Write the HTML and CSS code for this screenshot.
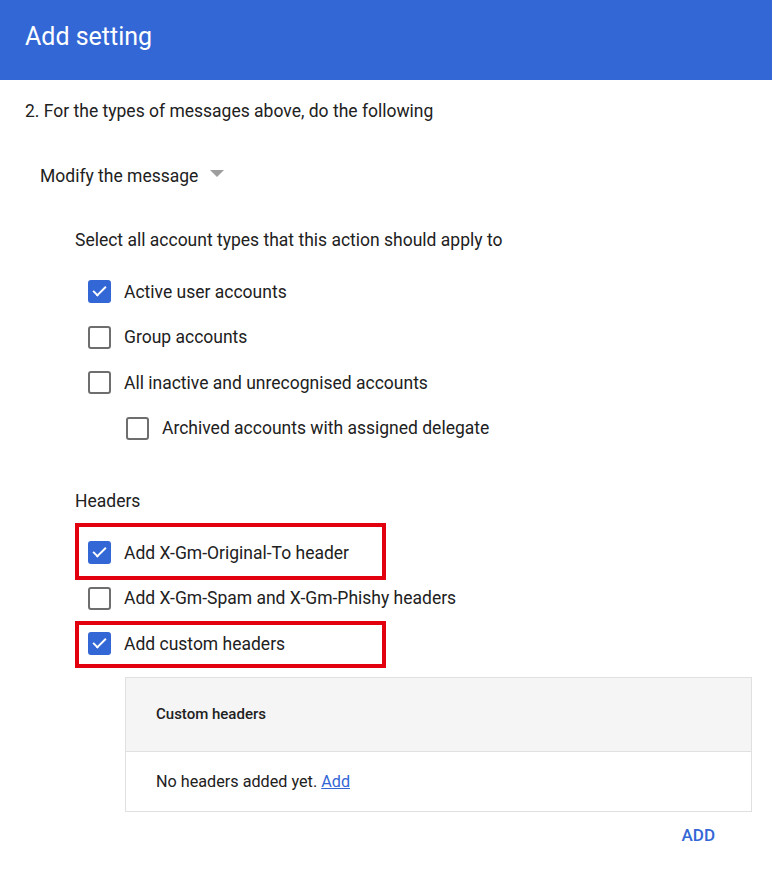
FILE: index.html
```html
<!DOCTYPE html>
<html>
<head>
    <title>Add setting</title>
    <link rel="stylesheet" href="styles.css">
</head>
<body>
    <div class="topbar">
        <h1>Add setting</h1>
    </div>

    <div class="content">
        <p class="step">2. For the types of messages above, do the following</p>

        <div class="dropdown">
            <span>Modify the message</span>
            <span class="caret"></span>
        </div>

        <div class="section">
            <p class="label">Select all account types that this action should apply to</p>

            <div class="options">
                <div class="option"><span class="box checked"></span>Active user accounts</div>
                <div class="option"><span class="box"></span>Group accounts</div>
                <div class="option"><span class="box"></span>All inactive and unrecognised accounts</div>
                <div class="option sub"><span class="box"></span>Archived accounts with assigned delegate</div>
            </div>

            <p class="label headers-label">Headers</p>

            <div class="options">
                <div class="option marked first"><span class="box checked"></span>Add X-Gm-Original-To header</div>
                <div class="option"><span class="box"></span>Add X-Gm-Spam and X-Gm-Phishy headers</div>
                <div class="option marked last"><span class="box checked"></span>Add custom headers</div>
            </div>

            <div class="table">
                <div class="table-head">Custom headers</div>
                <div class="table-body">No headers added yet. <a href="#">Add</a></div>
            </div>

            <div class="actions">
                <button>ADD</button>
            </div>
        </div>
    </div>
</body>
</html>
```

FILE: styles.css
```css
body {
    margin: 0;
    font-family: Roboto, 'Noto Sans', sans-serif;
    color: #212121;
    background: #fff;
}

.topbar {
    background: #3367d6;
    height: 80px;
    display: flex;
    align-items: center;
    padding: 0 25px;
}

.topbar h1 {
    margin: 0;
    color: #fff;
    font-size: 25px;
    font-weight: 400;
    position: relative;
    top: -4px;
}

.content {
    padding: 0 0 0 25px;
}

.step {
    margin: 0;
    padding-top: 20px;
    font-size: 17.5px;
    line-height: 22px;
}

.dropdown {
    display: flex;
    align-items: center;
    margin: 43px 0 0 15px;
    font-size: 17.5px;
    line-height: 22px;
}

.caret {
    width: 0;
    height: 0;
    border-left: 7px solid transparent;
    border-right: 7px solid transparent;
    border-top: 7px solid #9e9e9e;
    margin-left: 12px;
    position: relative;
    top: -3px;
}

.section {
    padding-left: 50px;
}

.label {
    margin: 42px 0 0;
    font-size: 17.5px;
    line-height: 22px;
}

.headers-label {
    margin-top: 39px;
}

.options {
    margin-top: 18px;
    display: flex;
    flex-direction: column;
}

.option {
    display: flex;
    align-items: center;
    height: 45.5px;
    padding-left: 13px;
    font-size: 17.5px;
    white-space: nowrap;
    position: relative;
}

.option.sub {
    padding-left: 51px;
}

/* red annotation frames */
.option.marked::before {
    content: '';
    position: absolute;
    left: 0;
    width: 303px;
    border: 4px solid #e2000f;
    pointer-events: none;
}

.option.first::before {
    top: -7px;
    bottom: -4px;
}

.option.last::before {
    top: 0;
    bottom: -1px;
}

.box {
    width: 19px;
    height: 19px;
    border: 2px solid #6e6e6e;
    border-radius: 3px;
    margin-right: 13px;
    flex-shrink: 0;
    position: relative;
}

.box.checked {
    background: #3367d6;
    border-color: #3367d6;
}

.box.checked::after {
    content: '';
    position: absolute;
    left: 3px;
    top: 4px;
    width: 11px;
    height: 5px;
    border-left: 2px solid #fff;
    border-bottom: 2px solid #fff;
    transform: rotate(-45deg);
}

.table {
    margin: 10px 20px 0 50px;
    border: 1px solid #e0e0e0;
}

.table-head {
    background: #f5f5f5;
    height: 73px;
    display: flex;
    align-items: center;
    padding-left: 30px;
    font-size: 15px;
    font-weight: 500;
    border-bottom: 1px solid #e0e0e0;
}

.table-body {
    height: 59px;
    display: flex;
    align-items: center;
    padding-left: 30px;
    font-size: 16.2px;
    white-space: pre;
}

.table-body a {
    color: #3367d6;
    text-decoration: underline;
}

.actions {
    display: flex;
    justify-content: flex-end;
    padding-right: 57px;
    margin-top: 13px;
}

.actions button {
    background: none;
    border: none;
    padding: 0;
    font-family: inherit;
    font-size: 17px;
    line-height: 20px;
    font-weight: 500;
    color: #3367d6;
    cursor: pointer;
}
```
